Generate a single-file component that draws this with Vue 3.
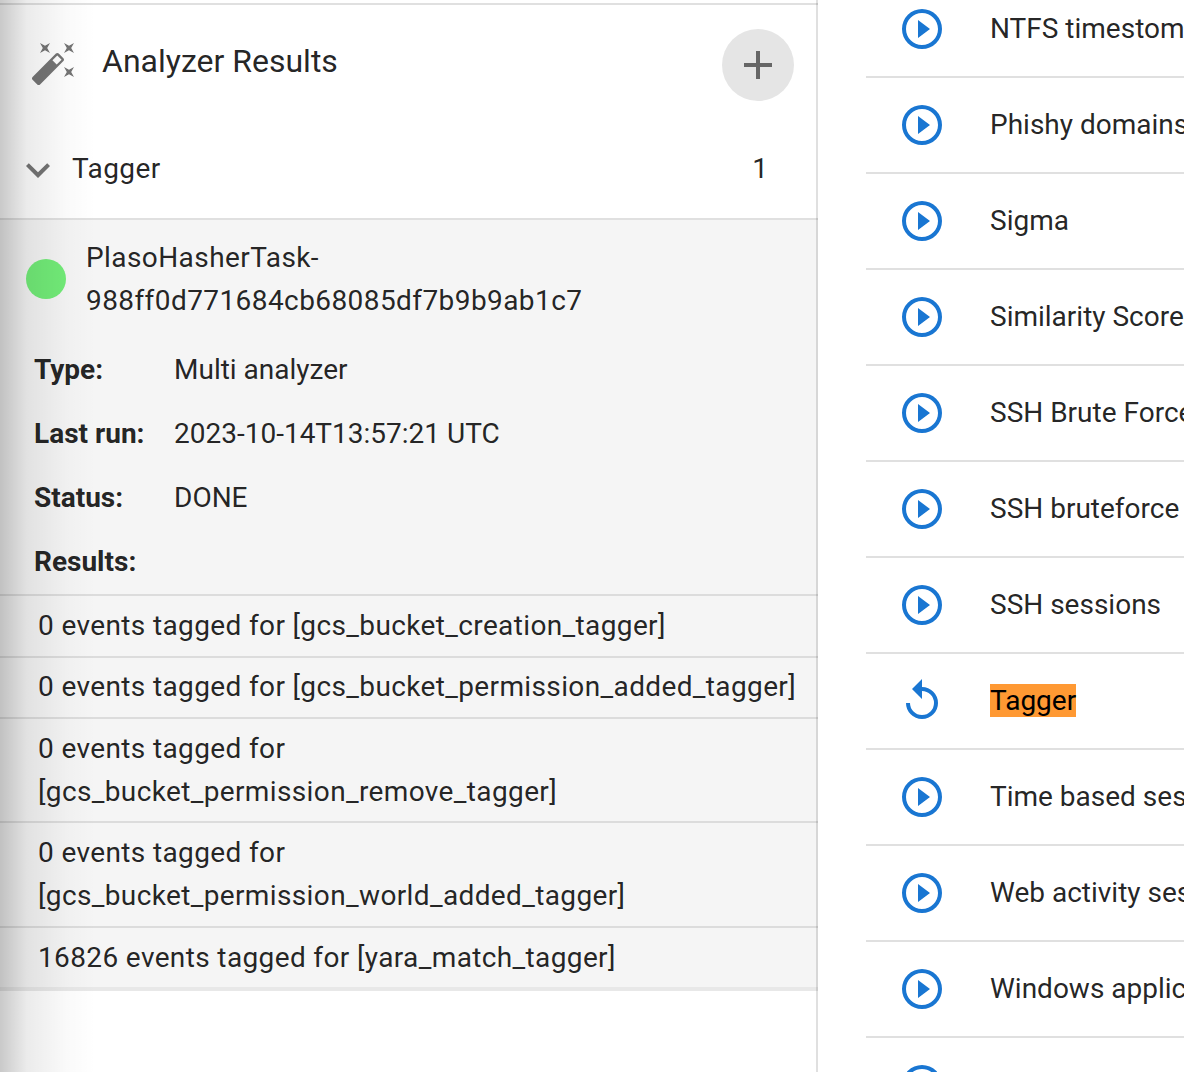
<template>
  <div class="page">
    <section class="panel">
      <div class="shade"></div>
      <header class="panel-head">
        <svg class="wand" viewBox="0 0 24 24"><path :d="icons.wand" /></svg>
        <span class="panel-title">Analyzer Results</span>
        <button class="add-btn">
          <svg viewBox="0 0 24 24"><path :d="icons.plus" /></svg>
        </button>
      </header>
      <div class="group-row">
        <svg class="chevron" viewBox="0 0 24 24"><path :d="icons.chevron" /></svg>
        <span class="group-name">Tagger</span>
        <span class="group-count">1</span>
      </div>
      <div class="session">
        <div class="session-head">
          <span class="dot"></span>
          <span class="session-name">PlasoHasherTask-<br />988ff0d771684cb68085df7b9b9ab1c7</span>
        </div>
        <dl class="meta">
          <template v-for="m in meta" :key="m.label">
            <dt>{{ m.label }}</dt>
            <dd>{{ m.value }}</dd>
          </template>
        </dl>
        <ul class="results">
          <li v-for="r in results" :key="r">{{ r }}</li>
        </ul>
      </div>
    </section>

    <ul class="analyzers">
      <li v-for="a in analyzers" :key="a.name" class="analyzer">
        <svg class="action" viewBox="0 0 24 24"><path :d="a.done ? icons.replay : icons.play" /></svg>
        <span class="analyzer-name"><mark v-if="a.done">{{ a.name }}</mark><template v-else>{{ a.name }}</template></span>
      </li>
    </ul>
  </div>
</template>

<script setup>
const icons = {
  wand: 'M7.5,5.6L5,7L6.4,4.5L5,2L7.5,3.4L10,2L8.6,4.5L10,7L7.5,5.6M19.5,15.4L22,14L20.6,16.5L22,19L19.5,17.6L17,19L18.4,16.5L17,14L19.5,15.4M22,2L20.6,4.5L22,7L19.5,5.6L17,7L18.4,4.5L17,2L19.5,3.4L22,2M13.34,12.78L15.78,10.34L13.66,8.22L11.22,10.66L13.34,12.78M14.37,7.29L16.71,9.63C17.1,10 17.1,10.65 16.71,11.04L5.04,22.71C4.65,23.1 4,23.1 3.63,22.71L1.29,20.37C0.9,20 0.9,19.35 1.29,18.96L12.96,7.29C13.35,6.9 14,6.9 14.37,7.29Z',
  plus: 'M19,13H13V19H11V13H5V11H11V5H13V11H19V13Z',
  chevron: 'M7.41,8.58L12,13.17L16.59,8.58L18,10L12,16L6,10L7.41,8.58Z',
  play: 'M10,16.5L16,12L10,7.5V16.5M12,20C7.59,20 4,16.41 4,12C4,7.59 7.59,4 12,4C16.41,4 20,7.59 20,12C20,16.41 16.41,20 12,20M12,2A10,10 0 0,0 2,12A10,10 0 0,0 12,22A10,10 0 0,0 22,12A10,10 0 0,0 12,2Z',
  replay: 'M12,5V1L7,6L12,11V7A6,6 0 0,1 18,13A6,6 0 0,1 12,19A6,6 0 0,1 6,13H4A8,8 0 0,0 12,21A8,8 0 0,0 20,13A8,8 0 0,0 12,5Z'
}

const meta = [
  { label: 'Type:', value: 'Multi analyzer' },
  { label: 'Last run:', value: '2023-10-14T13:57:21 UTC' },
  { label: 'Status:', value: 'DONE' },
  { label: 'Results:', value: '' }
]

const results = [
  '0 events tagged for [gcs_bucket_creation_tagger]',
  '0 events tagged for [gcs_bucket_permission_added_tagger]',
  '0 events tagged for [gcs_bucket_permission_remove_tagger]',
  '0 events tagged for [gcs_bucket_permission_world_added_tagger]',
  '16826 events tagged for [yara_match_tagger]'
]

const analyzers = [
  { name: 'NTFS timestomp detection' },
  { name: 'Phishy domains' },
  { name: 'Sigma' },
  { name: 'Similarity Scorer' },
  { name: 'SSH Brute Force Analyzer' },
  { name: 'SSH bruteforce' },
  { name: 'SSH sessions' },
  { name: 'Tagger', done: true },
  { name: 'Time based sessionizer' },
  { name: 'Web activity sessionizer' },
  { name: 'Windows application crash' },
  { name: 'Windows logon' }
]
</script>

<style>
html, body {
  margin: 0;
  overflow: hidden;
  background: #fff;
}
</style>

<style scoped>
.page {
  display: flex;
  align-items: flex-start;
  width: 1184px;
  height: 1072px;
  overflow: hidden;
  font-family: Roboto, "Liberation Sans", sans-serif;
  font-size: 28px;
  line-height: 43px;
  color: rgba(0, 0, 0, 0.87);
}

.panel {
  position: relative;
  flex: none;
  box-sizing: border-box;
  width: 818px;
  height: 1072px;
  padding-top: 3px;
}

/* divider sits over the rows, so they show through where they cross */
.panel::after {
  content: '';
  position: absolute;
  inset: 0 0 0 auto;
  width: 2px;
  background: rgba(0, 0, 0, 0.12);
}

.shade {
  position: absolute;
  inset: 0 auto 0 0;
  width: 96px;
  z-index: 2;
  pointer-events: none;
  background: linear-gradient(90deg, rgba(0, 0, 0, 0.21), rgba(0, 0, 0, 0.08) 28%, rgba(0, 0, 0, 0.02) 70%, rgba(0, 0, 0, 0));
}

.panel-head {
  display: flex;
  align-items: center;
  height: 120px;
  padding: 0 24px 0 30px;
  border-top: 2px solid rgba(0, 0, 0, 0.12);
}

.wand {
  flex: none;
  width: 48px;
  height: 48px;
  margin-top: -4px;
  fill: #757575;
}

.panel-title {
  flex: 1;
  margin: -8px 0 0 24px;
  font-size: 32px;
}

.add-btn {
  display: flex;
  align-items: center;
  justify-content: center;
  width: 72px;
  height: 72px;
  padding: 0;
  border: 0;
  border-radius: 50%;
  background: #e5e5e5;
}

.add-btn svg {
  width: 48px;
  height: 48px;
  fill: #666;
}

.group-row {
  display: flex;
  align-items: center;
  height: 93px;
  padding: 0 50px 0 14px;
  border-bottom: 2px solid rgba(0, 0, 0, 0.12);
}

.chevron {
  flex: none;
  width: 48px;
  height: 48px;
  margin-bottom: 4px;
  fill: #757575;
}

.group-name {
  flex: 1;
  margin: 0 0 6px 10px;
  letter-spacing: 0.4px;
}

.group-count {
  margin-bottom: 6px;
}

.session {
  background: #f5f5f5;
  border-bottom: 4px solid rgba(0, 0, 0, 0.09);
  background-clip: padding-box;
}

.session-head {
  display: flex;
  align-items: center;
  gap: 20px;
  padding: 16px 0 0 26px;
  letter-spacing: 0.42px;
}

.dot {
  flex: none;
  width: 40px;
  height: 40px;
  border-radius: 50%;
  background: #72ec78;
}

.meta {
  display: grid;
  grid-template-columns: 140px 1fr;
  grid-auto-rows: 64px;
  align-items: center;
  margin: 15px 0 1px;
  padding-left: 34px;
}

.meta dt {
  font-weight: 700;
}

.meta dd {
  margin: 0;
}

.results {
  margin: 0;
  padding: 0;
  list-style: none;
  letter-spacing: 0.37px;
}

.results li {
  padding: 8.8px 20px 7.8px 38px;
  line-height: 42.9px;
  border-top: 2px solid rgba(0, 0, 0, 0.1);
}

.analyzers {
  flex: none;
  width: 318px;
  margin: -18px 0 0 48px;
  padding: 0;
  list-style: none;
}

.analyzer {
  display: flex;
  align-items: center;
  height: 94px;
  border-bottom: 2px solid #e0e0e0;
  white-space: nowrap;
}

.action {
  flex: none;
  width: 48px;
  height: 48px;
  margin-left: 32px;
  fill: #1976d2;
}

.analyzer-name {
  margin: 0 0 2px 44px;
}

mark {
  background: #ff9933;
  color: #000;
}
</style>
